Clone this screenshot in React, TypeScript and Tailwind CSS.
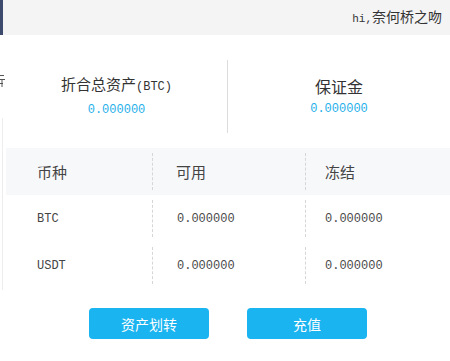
import React from "react";

const cjk = "font-['Noto_Sans_CJK_SC',sans-serif]";
const mono = "font-['Liberation_Mono','Noto_Sans_CJK_SC',monospace]";

const rows = [
  { coin: "BTC", avail: "0.000000", frozen: "0.000000" },
  { coin: "USDT", avail: "0.000000", frozen: "0.000000" },
];

export default function App() {
  return (
    <div className="relative w-[450px] h-[361px] bg-white overflow-hidden text-[#333]">
      {/* header */}
      <div className="h-[35px] bg-[#f4f4f5] flex items-center justify-end pr-[8px]">
        <span className="text-[14px] leading-[20px] text-[#333]">
          <span className={`${mono} text-[11px]`}>hi,</span>
          <span className={cjk}>奈何桥之吻</span>
        </span>
      </div>

      <div className="pl-[6px]">
        {/* summary */}
        <div className="pt-[25px] pb-[15px] grid grid-cols-[221px_1fr]">
          <div className="h-[73px] flex flex-col items-center justify-center">
            <div className="text-[15px] leading-[20px] text-[#333]">
              <span className={cjk}>折合总资产</span>
              <span className={`${mono} text-[12px]`}>(BTC)</span>
            </div>
            <div className={`${mono} mt-[4px] text-[12px] leading-[18px] text-[#26b0ea]`}>0.000000</div>
          </div>
          <div className="h-[73px] border-l border-[#dcdcdc] flex flex-col items-center justify-center">
            <div className={`${cjk} text-[16px] leading-[20px] text-[#333]`}>保证金</div>
            <div className={`${mono} mt-[4px] text-[12px] leading-[18px] text-[#26b0ea]`}>0.000000</div>
          </div>
        </div>

        {/* table */}
        <div className="grid grid-cols-[146px_153px_1fr] h-[47px] bg-[#f7f8fa]">
          <div className="flex items-center pl-[31px]">
            <span className={`${cjk} text-[15px] leading-[20px] text-[#444]`}>币种</span>
          </div>
          <div className="py-[5px]">
            <div className="h-full border-l border-dashed border-[#d6d6d6] flex items-center pl-[23px]">
              <span className={`${cjk} text-[15px] leading-[20px] text-[#444]`}>可用</span>
            </div>
          </div>
          <div className="py-[5px]">
            <div className="h-full border-l border-dashed border-[#d6d6d6] flex items-center pl-[19px]">
              <span className={`${cjk} text-[15px] leading-[20px] text-[#444]`}>冻结</span>
            </div>
          </div>
        </div>
        {rows.map((r) => (
          <div key={r.coin} className="grid grid-cols-[146px_153px_1fr] h-[47px]">
            <div className="flex items-center pl-[31px]">
              <span className={`${mono} text-[12px] leading-[18px] text-[#444]`}>{r.coin}</span>
            </div>
            <div className="py-[5px]">
              <div className="h-full border-l border-dashed border-[#d6d6d6] flex items-center pl-[24px]">
                <span className={`${mono} text-[12px] leading-[18px] text-[#4a4a4a]`}>{r.avail}</span>
              </div>
            </div>
            <div className="py-[5px]">
              <div className="h-full border-l border-dashed border-[#d6d6d6] flex items-center pl-[19px]">
                <span className={`${mono} text-[12px] leading-[18px] text-[#4a4a4a]`}>{r.frozen}</span>
              </div>
            </div>
          </div>
        ))}

        {/* buttons */}
        <div className="mt-[19px] flex justify-center gap-[38px]">
          <button className={`${cjk} w-[120px] h-[31px] rounded-[4px] bg-[#1ab4f0] text-white text-[14px] leading-[20px]`}>
            资产划转
          </button>
          <button className={`${cjk} w-[120px] h-[31px] rounded-[4px] bg-[#1ab4f0] text-white text-[14px] leading-[20px]`}>
            充值
          </button>
        </div>
      </div>

      {/* sidebar edge peeking in */}
      <div className="absolute left-0 top-0 w-[3px] h-[35px] bg-[#3d4a6c]" />
      <div className="absolute left-[2px] top-[118px] w-px h-[172px] bg-[#ededed]" />
      <svg className="absolute left-0 top-[72px]" width="5" height="15" viewBox="0 0 5 15">
        <path d="M0 3.5H4M0 7.5H5M0 11.5H3M2 7.5V15" stroke="#555" strokeWidth="1" fill="none" />
      </svg>
    </div>
  );
}
